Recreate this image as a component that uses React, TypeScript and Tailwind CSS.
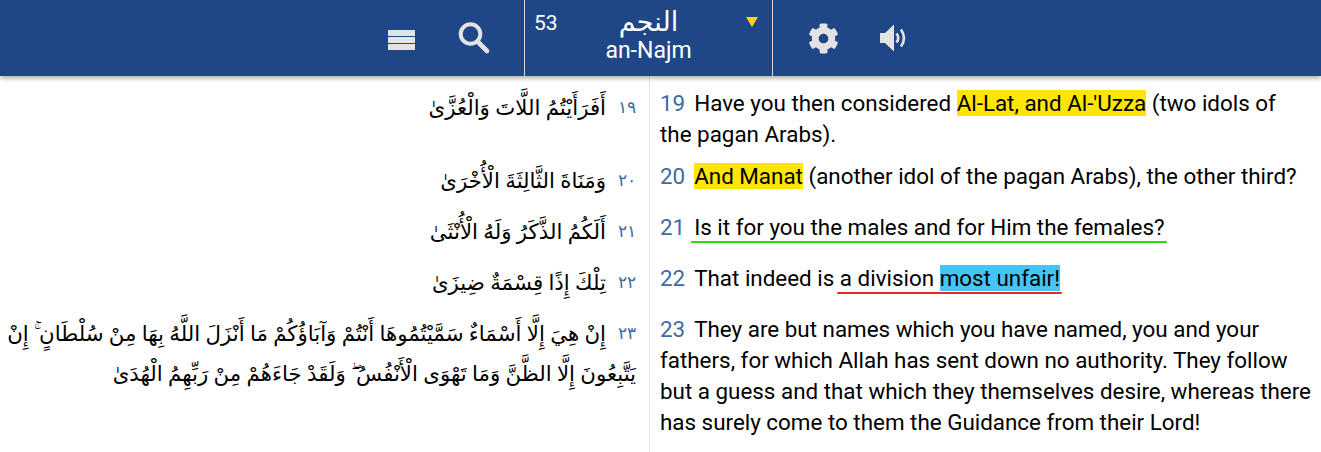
import React from "react";
import { FaCog } from "react-icons/fa";

const arabicFont = "font-['Times_New_Roman','DejaVu_Sans',serif]";

const Underline = ({ color, children }: { color: string; children: React.ReactNode }) => (
  <span className="relative">
    {children}
    <span className={`absolute left-[-3px] right-[-2px] bottom-[-3px] h-[2px] rounded-full ${color}`} />
  </span>
);

const verses: { ar: string; num: string; rowClass: string; content: React.ReactNode; arabic: string }[] = [
  {
    ar: "١٩",
    num: "19",
    rowClass: "h-[84px] pt-[11px]",
    arabic: "أَفَرَأَيْتُمُ اللَّاتَ وَالْعُزَّىٰ",
    content: (
      <>
        Have you then considered <span className="bg-[#ffe600]">Al-Lat, and Al-'Uzza</span> (two idols of the pagan Arabs).
      </>
    ),
  },
  {
    ar: "٢٠",
    num: "20",
    rowClass: "h-[51px]",
    arabic: "وَمَنَاةَ الثَّالِثَةَ الْأُخْرَىٰ",
    content: (
      <>
        <span className="bg-[#ffe600]">And Manat</span> (another idol of the pagan Arabs), the other third?
      </>
    ),
  },
  {
    ar: "٢١",
    num: "21",
    rowClass: "h-[51px]",
    arabic: "أَلَكُمُ الذَّكَرُ وَلَهُ الْأُنْثَىٰ",
    content: <Underline color="bg-[#2fd616]">Is it for you the males and for Him the females?</Underline>,
  },
  {
    ar: "٢٢",
    num: "22",
    rowClass: "h-[51px]",
    arabic: "تِلْكَ إِذًا قِسْمَةٌ ضِيزَىٰ",
    content: (
      <>
        That indeed is{" "}
        <Underline color="bg-[#e8262c]">
          a division <span className="bg-[#45c5f5]">most unfair!</span>
        </Underline>
      </>
    ),
  },
  {
    ar: "٢٣",
    num: "23",
    rowClass: "flex-1",
    arabic:
      "إِنْ هِيَ إِلَّا أَسْمَاءٌ سَمَّيْتُمُوهَا أَنْتُمْ وَآبَاؤُكُمْ مَا أَنْزَلَ اللَّهُ بِهَا مِنْ سُلْطَانٍ ۚ إِنْ يَتَّبِعُونَ إِلَّا الظَّنَّ وَمَا تَهْوَى الْأَنْفُسُ ۖ وَلَقَدْ جَاءَهُمْ مِنْ رَبِّهِمُ الْهُدَىٰ",
    content: (
      <>
        They are but names which you have named, you and your fathers, for which Allah has sent down no authority. They
        follow but a guess and that which they themselves desire, whereas there has surely come to them the Guidance from
        their Lord!
      </>
    ),
  },
];

export default function App() {
  return (
    <div className="flex h-[452px] w-[1321px] flex-col overflow-hidden bg-white font-['Roboto',sans-serif] text-black">
      <header className="relative z-10 flex h-[76px] shrink-0 bg-[#1f4788] pl-[524px] shadow-[0_2px_5px_rgba(0,0,0,0.35)]">
        <div className="relative flex w-[249px] flex-col items-center border-x border-[#d9d9d9] pt-[6px] text-white">
          <span className="absolute left-[9px] top-[11px] text-[21px] leading-6">53</span>
          <span className={`h-[32px] text-[27px] leading-[32px] ${arabicFont}`} dir="rtl">
            النجم
          </span>
          <span className="text-[23px] leading-[25px]">an-Najm</span>
          <span className="absolute right-[14px] top-[17px] h-0 w-0 border-x-[6px] border-t-[10px] border-x-transparent border-t-[#ffd500]" />
        </div>
        <div className="flex items-center gap-[41px] pl-[35px] text-[#e3e3e3]">
          <FaCog size={31} />
          <svg width="28" height="28" viewBox="0 0 28 28" fill="none" stroke="currentColor">
            <path d="M0 9h5l9-8.500v27l-9-8.500h-5z" fill="currentColor" stroke="none" />
            <path d="M16.500 9.500q3.500 4.500 0 9" strokeWidth="2.6" />
            <path d="M21 5.500q6 8.500 0 17" strokeWidth="2.6" />
          </svg>
        </div>
        <div className="absolute left-[387px] top-[22px] flex items-center gap-[43px] text-[#e3e3e3]">
          <svg width="28" height="26" viewBox="0 0 28 26" fill="currentColor">
            <rect x="1" y="4" width="27" height="6" />
            <rect x="1" y="11" width="27" height="6" />
            <rect x="1" y="18" width="27" height="6" />
          </svg>
          <svg width="33" height="33" viewBox="0 0 33 33" fill="none" stroke="currentColor" strokeLinecap="round">
            <circle cx="12.500" cy="12" r="9.800" strokeWidth="4" />
            <line x1="20" y1="20" x2="29" y2="29" strokeWidth="4.600" />
          </svg>
        </div>
      </header>
      <main className="flex flex-1 flex-col">
        {verses.map((v) => (
          <div key={v.num} className={`grid grid-cols-[650px_671px] ${v.rowClass}`}>
            <div className="-my-[11px] border-r border-[#e6e6e6] py-[11px]" dir="rtl">
              <div className={`pl-[4px] pr-[13px] text-[21.3px] leading-[40px] ${arabicFont}`}>
                <span className="ml-[12px] align-[2px] font-['Roboto',sans-serif] text-[17px] text-[#3f6aa5]">{v.ar}</span>
                {v.arabic}
              </div>
            </div>
            <p className="pl-[10px] pr-[9px] pt-px text-[22.4px] leading-[31px]">
              <span className="mr-[9px] text-[#3f6aa5]">{v.num}</span>
              {v.content}
            </p>
          </div>
        ))}
      </main>
    </div>
  );
}
